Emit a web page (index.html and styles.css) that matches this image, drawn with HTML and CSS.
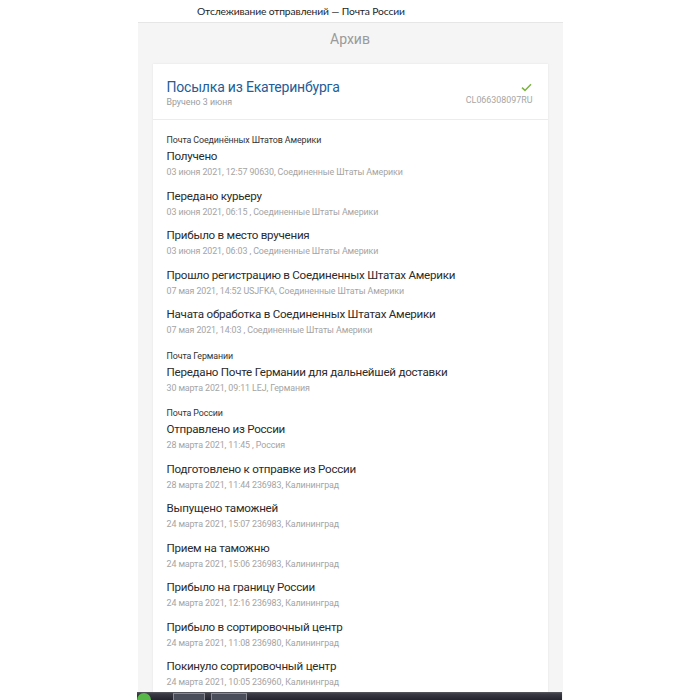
FILE: index.html
```html
<!DOCTYPE html>
<html lang="ru">
<head>
<meta charset="utf-8">
<title>Отслеживание отправлений — Почта России</title>
<link rel="stylesheet" href="styles.css">
</head>
<body>
<div class="titlebar">Отслеживание отправлений — Почта России</div>
<div class="panel">
  <div class="panel-head">Архив</div>
  <div class="card">
    <div class="card-head">
      <div class="head-left">
        <div class="parcel-title">Посылка из Екатеринбурга</div>
        <div class="parcel-sub">Вручено 3 июня</div>
      </div>
      <div class="head-right">
        <svg class="check" width="11" height="9" viewBox="0 0 11 9"><path d="M1 4.6 L4 7.4 L10 1.2" fill="none" stroke="#7cb342" stroke-width="1.5"/></svg>
        <div class="track">CL066308097RU</div>
      </div>
    </div>
    <div class="card-body">
      <div class="group">
        <div class="group-label">Почта Соединённых Штатов Америки</div>
        <div class="item"><div class="item-title">Получено</div><div class="item-date">03 июня 2021, 12:57 90630, Соединенные Штаты Америки</div></div>
        <div class="item"><div class="item-title">Передано курьеру</div><div class="item-date">03 июня 2021, 06:15 , Соединенные Штаты Америки</div></div>
        <div class="item"><div class="item-title">Прибыло в место вручения</div><div class="item-date">03 июня 2021, 06:03 , Соединенные Штаты Америки</div></div>
        <div class="item"><div class="item-title">Прошло регистрацию в Соединенных Штатах Америки</div><div class="item-date">07 мая 2021, 14:52 USJFKA, Соединенные Штаты Америки</div></div>
        <div class="item"><div class="item-title">Начата обработка в Соединенных Штатах Америки</div><div class="item-date">07 мая 2021, 14:03 , Соединенные Штаты Америки</div></div>
      </div>
      <div class="group">
        <div class="group-label">Почта Германии</div>
        <div class="item"><div class="item-title">Передано Почте Германии для дальнейшей доставки</div><div class="item-date">30 марта 2021, 09:11 LEJ, Германия</div></div>
      </div>
      <div class="group">
        <div class="group-label">Почта России</div>
        <div class="item"><div class="item-title">Отправлено из России</div><div class="item-date">28 марта 2021, 11:45 , Россия</div></div>
        <div class="item"><div class="item-title">Подготовлено к отправке из России</div><div class="item-date">28 марта 2021, 11:44 236983, Калининград</div></div>
        <div class="item"><div class="item-title">Выпущено таможней</div><div class="item-date">24 марта 2021, 15:07 236983, Калининград</div></div>
        <div class="item"><div class="item-title">Прием на таможню</div><div class="item-date">24 марта 2021, 15:06 236983, Калининград</div></div>
        <div class="item"><div class="item-title">Прибыло на границу России</div><div class="item-date">24 марта 2021, 12:16 236983, Калининград</div></div>
        <div class="item"><div class="item-title">Прибыло в сортировочный центр</div><div class="item-date">24 марта 2021, 11:08 236980, Калининград</div></div>
        <div class="item"><div class="item-title">Покинуло сортировочный центр</div><div class="item-date">24 марта 2021, 10:05 236960, Калининград</div></div>
      </div>
    </div>
  </div>
</div>
<div class="taskbar">
  <span class="orb"></span>
  <span class="tb-btn"></span>
  <span class="tb-btn tb-btn2"></span>
</div>
</body>
</html>
```

FILE: styles.css
```css
html, body {
  margin: 0;
  padding: 0;
  background: #ffffff;
}
body {
  width: 700px;
  height: 700px;
  overflow: hidden;
  position: relative;
  font-family: Roboto, "Liberation Sans", sans-serif;
}
.titlebar {
  height: 22px;
  line-height: 22px;
  padding-left: 197px;
  font-family: Lato, "Noto Sans", sans-serif;
  font-size: 10.3px;
  letter-spacing: -0.15px;
  color: #1e1e1e;
}
.panel {
  width: 425px;
  margin: 0 auto;
  height: 678px;
  background: #f5f5f5;
  border-top: 1px solid #e6e6e6;
  box-sizing: border-box;
  overflow: hidden;
  padding: 0 15px;
}
.panel-head {
  height: 41px;
  line-height: 32px;
  text-align: center;
  font-size: 14px;
  color: #9a9a9a;
}
.card {
  background: #ffffff;
  box-shadow: 0 0 2px rgba(0,0,0,0.08);
}
.card-head {
  display: flex;
  justify-content: space-between;
  padding: 14px 15px 11px 14px;
  border-bottom: 1px solid #ececec;
}
.parcel-title {
  font-size: 14px;
  letter-spacing: -0.2px;
  line-height: 18px;
  color: #245d98;
}
.parcel-sub {
  font-size: 8.8px;
  line-height: 12px;
  margin-top: 0;
  color: #9c9c9c;
}
.head-right {
  display: flex;
  flex-direction: column;
  align-items: flex-end;
}
.check {
  margin-top: 5px;
  margin-right: 1px;
}
.track {
  font-size: 8.9px;
  line-height: 12px;
  margin-top: 2px;
  color: #a6a6a6;
}
.card-body {
  padding: 12px 14px 0 14px;
}
.group {
  padding-top: 2px;
}
.group:first-child {
  padding-top: 0;
}
.group-label {
  font-size: 8.9px;
  letter-spacing: -0.1px;
  line-height: 16px;
  color: #333333;
}
.item {
  padding-bottom: 7.5px;
}
.item-title {
  font-size: 11.6px;
  letter-spacing: -0.25px;
  line-height: 16px;
  color: #2b2b2b;
}
.item-date {
  font-size: 8.9px;
  letter-spacing: -0.1px;
  line-height: 16px;
  color: #a4a4a4;
}
.taskbar {
  position: absolute;
  left: 137px;
  top: 692px;
  width: 425px;
  height: 8px;
  background: linear-gradient(#5a5a62 0, #3a3a44 2px, #24242e 8px);
  display: flex;
  align-items: flex-end;
  gap: 6px;
}
.orb {
  width: 14px;
  height: 7px;
  border-radius: 7px 7px 0 0;
  background: #58b84a;
  margin-right: 16px;
}
.tb-btn {
  width: 32px;
  height: 7px;
  border: 1px solid #8a8a92;
  border-bottom: none;
  background: #4a4e5a;
  box-sizing: border-box;
}
.tb-btn2 {
  width: 36px;
}
```
